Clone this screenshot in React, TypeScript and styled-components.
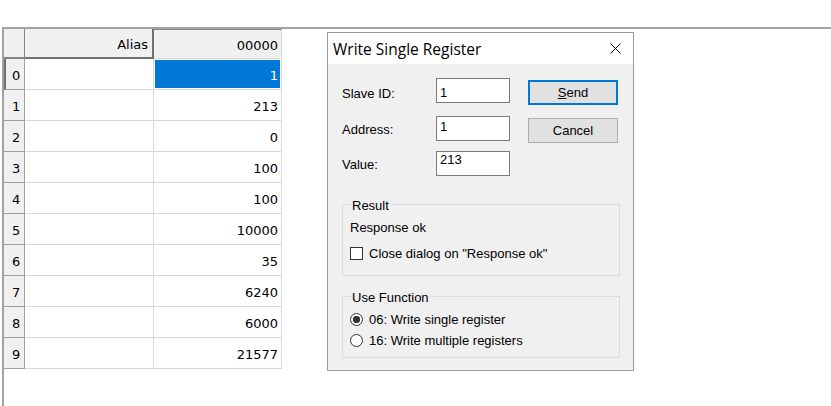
import React from "react";
import styled, { createGlobalStyle } from "styled-components";

const GlobalStyle = createGlobalStyle`
  html, body { margin: 0; padding: 0; background: #fff; }
  body { width: 831px; height: 406px; overflow: hidden; }
`;

const Page = styled.div`
  padding-top: 27px;
  height: 406px;
  box-sizing: border-box;
`;

const Frame = styled.div`
  margin-left: 2px;
  height: 100%;
  box-sizing: border-box;
  border-top: 2px solid #a3a3a3;
  border-left: 2px solid #a3a3a3;
  display: flex;
  align-items: flex-start;
`;

/* ---------- Sheet ---------- */

const Sheet = styled.div`
  display: grid;
  grid-template-columns: 21px 129px 128px;
  grid-template-rows: 30px;
  grid-auto-rows: 31px;
  font-family: "DejaVu Sans", sans-serif;
  font-size: 13px;
  color: #000;
`;

const Cell = styled.div`
  box-sizing: border-box;
  display: flex;
  align-items: center;
  padding-top: 2px;
`;

const Corner = styled(Cell)`
  background: #f0f0f0;
  border-right: 1px solid #858585;
  border-bottom: 2px solid #858585;
`;

const ColHead = styled(Cell)<{ $raised?: boolean }>`
  background: #f0f0f0;
  justify-content: flex-end;
  padding-right: ${(p) => (p.$raised ? 4 : 3)}px;
  border-right: ${(p) => (p.$raised ? "2px solid #707070" : "1px solid #dadada")};
  border-bottom: ${(p) => (p.$raised ? "2px solid #707070" : "1px solid #dadada")};
  border-top: ${(p) => (p.$raised ? "none" : "1px solid #8a8a8a")};
`;

const RowHead = styled(Cell)<{ $active?: boolean }>`
  background: #f0f0f0;
  padding-left: ${(p) => (p.$active ? 6 : 8)}px;
  border-left: ${(p) => (p.$active ? "2px solid #707070" : "none")};
  border-right: 1px solid #a0a0a0;
  border-bottom: 1px solid #a0a0a0;
`;

const DataCell = styled(Cell)<{ $selected?: boolean }>`
  justify-content: flex-end;
  padding-right: 3px;
  background: ${(p) => (p.$selected ? "#0078d7" : "#fff")};
  color: ${(p) => (p.$selected ? "#fff" : "#000")};
  box-shadow: ${(p) => (p.$selected ? "inset 0 0 0 1px #fff" : "none")};
  border-right: 1px solid #d8d8d8;
  border-bottom: 1px solid #d8d8d8;
`;

/* ---------- Dialog ---------- */

const Dialog = styled.div`
  margin: 3px 0 0 45px;
  width: 307px;
  box-sizing: border-box;
  border: 1px solid #9b9b9b;
  background: #f0f0f0;
  font-family: "Liberation Sans", Arial, sans-serif;
  font-size: 13px;
  color: #000;
`;

const TitleBar = styled.div`
  height: 31px;
  background: #fff;
  display: flex;
  align-items: center;
  justify-content: space-between;
  padding: 0 12px 0 5px;
`;

const Title = styled.span`
  font-family: "Open Sans", "Liberation Sans", sans-serif;
  font-size: 15.5px;
  padding-top: 1px;
`;

const Body = styled.div`
  padding: 14px 13px 12px 14px;
  display: flex;
  flex-direction: column;
`;

const FieldRow = styled.div<{ $mt: number }>`
  display: flex;
  align-items: flex-start;
  margin-top: ${(p) => p.$mt}px;
`;

const Label = styled.div<{ $pt: number }>`
  width: 94px;
  line-height: 15px;
  padding-top: ${(p) => p.$pt}px;
`;

const TextBox = styled.input<{ $pt: number; $pb: number }>`
  width: 74px;
  height: 25px;
  box-sizing: border-box;
  border: 1px solid #7a7a7a;
  background: #fff;
  padding: ${(p) => p.$pt}px 2px ${(p) => p.$pb}px 3px;
  margin: 0;
  font-family: "Liberation Sans", Arial, sans-serif;
  font-size: 13px;
  color: #000;
  outline: none;
`;

const Button = styled.button<{ $default?: boolean }>`
  width: 90px;
  height: 25px;
  margin: 2px 0 0 18px;
  box-sizing: border-box;
  padding: 0;
  background: #e1e1e1;
  border: ${(p) => (p.$default ? "2px solid #0078d7" : "1px solid #adadad")};
  font-family: "Liberation Sans", Arial, sans-serif;
  font-size: 13px;
  color: #000;
`;

const Group = styled.div<{ $mt: number; $pad: string }>`
  position: relative;
  margin-top: ${(p) => p.$mt}px;
  border: 1px solid #dcdcdc;
  padding: ${(p) => p.$pad};
  display: flex;
  flex-direction: column;
`;

const GroupTitle = styled.span`
  position: absolute;
  top: -7px;
  left: 8px;
  padding: 0 1px;
  line-height: 15px;
  background: #f0f0f0;
`;

const Text = styled.div`
  line-height: 15px;
`;

const OptionRow = styled.div<{ $h: number; $mt?: number }>`
  display: flex;
  align-items: center;
  gap: 6px;
  height: ${(p) => p.$h}px;
  margin-top: ${(p) => p.$mt ?? 0}px;
`;

const CheckBox = styled.span`
  width: 13px;
  height: 13px;
  box-sizing: border-box;
  border: 1px solid #333;
  background: #fff;
  flex: none;
`;

const Radio = styled.span<{ $checked?: boolean }>`
  width: 13px;
  height: 13px;
  box-sizing: border-box;
  border: 1px solid #333;
  border-radius: 50%;
  flex: none;
  background: ${(p) =>
    p.$checked
      ? "radial-gradient(circle, #333 0 3.4px, #fff 4px)"
      : "#fff"};
`;

const CloseIcon = () => (
  <svg width="11" height="11" viewBox="0 0 11 11">
    <path d="M0.5 0.5 L10.5 10.5 M10.5 0.5 L0.5 10.5" stroke="#000" strokeWidth="1" fill="none" />
  </svg>
);

const values = ["1", "213", "0", "100", "100", "10000", "35", "6240", "6000", "21577"];

export default function App() {
  return (
    <>
      <GlobalStyle />
      <Page>
        <Frame>
          <Sheet>
            <Corner />
            <ColHead $raised>Alias</ColHead>
            <ColHead>00000</ColHead>
            {values.map((v, i) => (
              <React.Fragment key={i}>
                <RowHead $active={i === 0}>{i}</RowHead>
                <DataCell />
                <DataCell $selected={i === 0}>{v}</DataCell>
              </React.Fragment>
            ))}
          </Sheet>

          <Dialog>
            <TitleBar>
              <Title>Write Single Register</Title>
              <CloseIcon />
            </TitleBar>
            <Body>
              <FieldRow $mt={0}>
                <Label $pt={8}>Slave ID:</Label>
                <TextBox readOnly defaultValue="1" $pt={4} $pb={0} />
                <Button $default>
                  <u>S</u>end
                </Button>
              </FieldRow>
              <FieldRow $mt={11}>
                <Label $pt={6}>Address:</Label>
                <TextBox readOnly defaultValue="1" $pt={0} $pb={4} />
                <Button>Cancel</Button>
              </FieldRow>
              <FieldRow $mt={8}>
                <Label $pt={6}>Value:</Label>
                <TextBox readOnly defaultValue="213" $pt={0} $pb={8} />
              </FieldRow>

              <Group $mt={28} $pad="15px 7px 14px 7px">
                <GroupTitle>Result</GroupTitle>
                <Text>Response ok</Text>
                <OptionRow $h={15} $mt={11}>
                  <CheckBox />
                  <span>Close dialog on "Response ok"</span>
                </OptionRow>
              </Group>

              <Group $mt={20} $pad="12px 7px 6px 7px">
                <GroupTitle>Use Function</GroupTitle>
                <OptionRow $h={21}>
                  <Radio $checked />
                  <span>06: Write single register</span>
                </OptionRow>
                <OptionRow $h={21}>
                  <Radio />
                  <span>16: Write multiple registers</span>
                </OptionRow>
              </Group>
            </Body>
          </Dialog>
        </Frame>
      </Page>
    </>
  );
}
